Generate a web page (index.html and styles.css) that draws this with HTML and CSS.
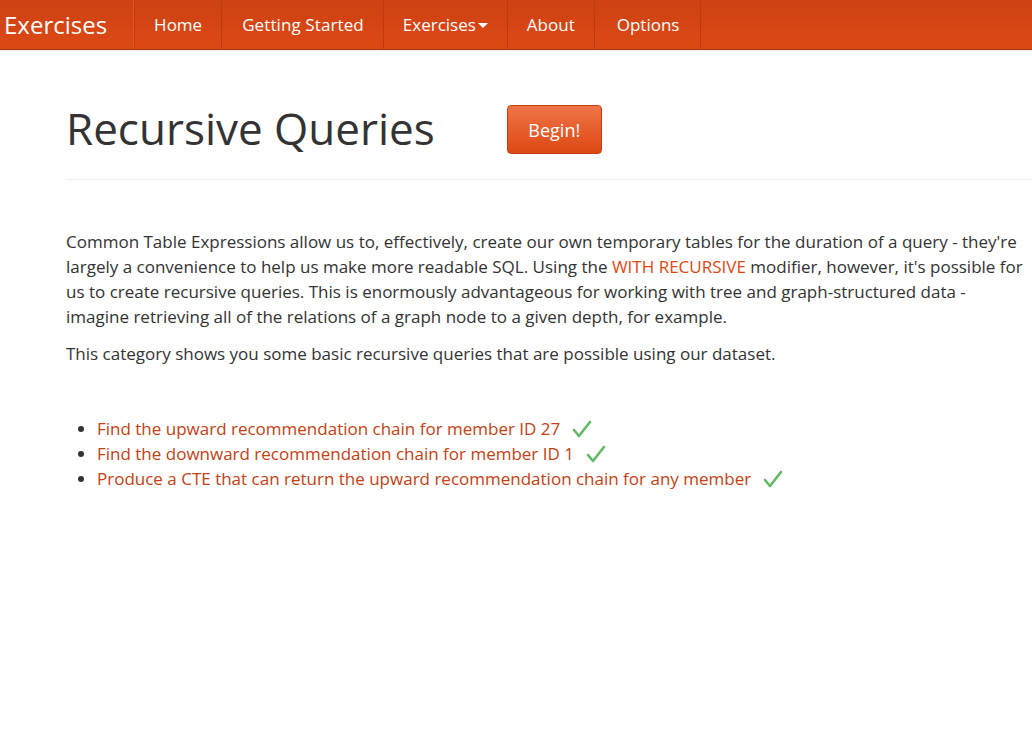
FILE: index.html
```html
<!DOCTYPE html>
<html lang="en">
<head>
<meta charset="utf-8">
<title>Recursive Queries</title>
<link rel="stylesheet" href="styles.css">
</head>
<body>
<header class="navbar">
  <a class="brand" href="#">Exercises</a>
  <nav class="nav">
    <a class="nav-item" href="#">Home</a>
    <a class="nav-item nav-wide" href="#">Getting Started</a>
    <a class="nav-item" href="#">Exercises<span class="caret"></span></a>
    <a class="nav-item" href="#">About</a>
    <a class="nav-item nav-last" href="#">Options</a>
  </nav>
</header>
<main class="content">
  <div class="page-header">
    <h1 class="title">Recursive Queries</h1>
    <a class="btn-begin" href="#">Begin!</a>
  </div>
  <p class="lead-text">Common Table Expressions allow us to, effectively, create our own temporary tables for the duration of a query - they're largely a convenience to help us make more readable SQL. Using the <span class="hl">WITH RECURSIVE</span> modifier, however, it's possible for us to create recursive queries. This is enormously advantageous for working with tree and graph-structured data - imagine retrieving all of the relations of a graph node to a given depth, for example.</p>
  <p class="lead-text">This category shows you some basic recursive queries that are possible using our dataset.</p>
  <ul class="exercise-list">
    <li><a href="#">Find the upward recommendation chain for member ID 27</a><svg class="check" viewBox="0 0 20 20"><path d="M2 11 L7 17 L18 3" /></svg></li>
    <li><a href="#">Find the downward recommendation chain for member ID 1</a><svg class="check" viewBox="0 0 20 20"><path d="M2 11 L7 17 L18 3" /></svg></li>
    <li><a href="#">Produce a CTE that can return the upward recommendation chain for any member</a><svg class="check" viewBox="0 0 20 20"><path d="M2 11 L7 17 L18 3" /></svg></li>
  </ul>
</main>
</body>
</html>
```
FILE: styles.css
```css
html, body {
  margin: 0;
  padding: 0;
  background: #fff;
}
body {
  font-family: "Open Sans", "Noto Sans", sans-serif;
  color: #333;
  font-size: 17px;
}
a { text-decoration: none; }

.navbar {
  height: 49px;
  display: flex;
  align-items: stretch;
  background: linear-gradient(to bottom, #cd4113, #dd4915);
  border-bottom: 1px solid #a83a12;
  box-shadow: 0 1px 3px rgba(0,0,0,0.1);
}
.brand {
  color: #fff;
  font-size: 24px;
  padding: 0 26px 0 4px;
  display: flex;
  align-items: center;
  border-right: 1px solid #e4572a;
}
.nav {
  display: flex;
  align-items: stretch;
}
.nav-item {
  color: #fff;
  font-size: 17px;
  padding: 0 19px;
  display: flex;
  align-items: center;
  border-right: 1px solid #b93b10;
}
.nav-item:first-child { border-left: 1px solid #b93b10; }
.nav-wide { padding: 0 19px 0 20px; letter-spacing: 0.1px; }
.nav-last { padding: 0 21px 0 22px; }
.caret {
  display: inline-block;
  width: 0;
  height: 0;
  margin-left: 2px;
  margin-top: 2px;
  border-left: 5px solid transparent;
  border-right: 5px solid transparent;
  border-top: 5px solid #fff;
}

.content {
  padding-left: 66px;
}
.page-header {
  display: flex;
  align-items: center;
  gap: 72px;
  padding: 52px 0 25px;
  border-bottom: 1px solid #eee;
}
.title {
  margin: 0;
  font-weight: 400;
  font-size: 44px;
  line-height: 52px;
  color: #333;
}
.btn-begin {
  color: #fff;
  font-size: 18px;
  width: 95px;
  height: 49px;
  box-sizing: border-box;
  display: flex;
  align-items: center;
  justify-content: center;
  border-radius: 4px;
  background: linear-gradient(to bottom, #ef7446, #dd4814);
  border: 1px solid #c23f12;
  margin-top: 3px;
}
.lead-text {
  margin: 49px 0 12px;
  max-width: 960px;
  font-size: 17px;
  line-height: 25px;
}
.lead-text + .lead-text { margin-top: 0; }
.hl { color: #dd4814; }

.exercise-list {
  margin: 50px 0 0;
  padding-left: 31px;
  font-size: 17px;
  line-height: 25px;
}
.exercise-list a { color: #c34113; }
.check {
  width: 20px;
  height: 20px;
  margin-left: 12px;
  vertical-align: -4px;
}
.check path {
  fill: none;
  stroke: #62b966;
  stroke-width: 2.6;
  stroke-linecap: round;
  stroke-linejoin: round;
}
```
